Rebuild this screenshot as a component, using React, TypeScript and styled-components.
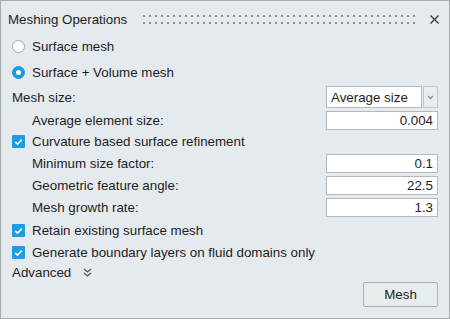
import React from "react";
import styled, { createGlobalStyle } from "styled-components";

const Global = createGlobalStyle`
  html, body { margin: 0; padding: 0; background: #e4eaee; }
  * { box-sizing: border-box; }
`;

const Panel = styled.div`
  width: 450px;
  height: 319px;
  border: 1px solid #a6abb0;
  background: #e4eaee;
  display: flex;
  flex-direction: column;
  font-family: "Liberation Sans", Arial, sans-serif;
  font-size: 13.33px;
  color: #1e1e1e;
`;

const TitleBar = styled.div`
  height: 37px;
  display: flex;
  align-items: center;
  padding: 0 9px 0 7px;
`;

const Title = styled.span`
  white-space: nowrap;
`;

const Grip = styled.svg`
  flex: 1;
  height: 9px;
  margin: 0 10px 0 16px;
`;

const CloseButton = styled.svg`
  width: 11px;
  height: 11px;
  flex: none;
`;

const Body = styled.div`
  display: flex;
  flex-direction: column;
  padding: 0 11px;
`;

const Row = styled.div<{ $h: number; $mt: number; $indent?: boolean }>`
  height: ${(p) => p.$h}px;
  margin-top: ${(p) => p.$mt}px;
  padding-left: ${(p) => (p.$indent ? 20 : 0)}px;
  display: flex;
  align-items: center;
  white-space: nowrap;
`;

const Label = styled.span`
  flex: 1;
`;

const RadioCircle = styled.span<{ $on?: boolean }>`
  width: 13px;
  height: 13px;
  border-radius: 50%;
  flex: none;
  margin-right: 7px;
  background: ${(p) => (p.$on ? "#1a9be0" : "#ffffff")};
  border: 1px solid ${(p) => (p.$on ? "#1a9be0" : "#a3a7ab")};
  display: flex;
  align-items: center;
  justify-content: center;
  &::after {
    content: "";
    display: ${(p) => (p.$on ? "block" : "none")};
    width: 5px;
    height: 5px;
    border-radius: 50%;
    background: #ffffff;
  }
`;

const CheckBox = styled.span`
  width: 13px;
  height: 13px;
  flex: none;
  margin-right: 7px;
  background: #1d9de2;
  border-radius: 1px;
  display: flex;
  align-items: center;
  justify-content: center;
`;

const Field = styled.div`
  width: 112px;
  height: 19px;
  background: #ffffff;
  border: 1px solid #b4b8bc;
  display: flex;
  align-items: center;
  justify-content: flex-end;
  padding-right: 4px;
`;

const Select = styled.div`
  width: 112px;
  height: 22px;
  display: flex;
`;

const SelectValue = styled.div`
  flex: 1;
  background: #ffffff;
  border: 1px solid #b4b8bc;
  display: flex;
  align-items: center;
  padding-left: 4px;
`;

const SelectArrow = styled.div`
  width: 15px;
  margin-left: 1px;
  border: 1px solid #c2c6ca;
  background: #e9edf0;
  display: flex;
  align-items: center;
  justify-content: center;
`;

const Expander = styled.svg`
  width: 9px;
  height: 9px;
  margin-left: 12px;
`;

const ButtonRow = styled.div`
  display: flex;
  justify-content: flex-end;
`;

const Button = styled.button`
  width: 75px;
  height: 25px;
  border: 1px solid #aab0b5;
  border-radius: 2px;
  background: #e7ecef;
  font-family: inherit;
  font-size: 13.33px;
  color: #1e1e1e;
  padding: 0;
`;

const Check = () => (
  <svg width="9" height="8" viewBox="0 0 9 8">
    <polyline points="1.3,4.2 3.5,6.2 7.8,1.6" fill="none" stroke="#fff" strokeWidth="1.6" />
  </svg>
);

export default function App() {
  return (
    <>
      <Global />
      <Panel>
        <TitleBar>
          <Title>Meshing Operations</Title>
          <Grip>
            <defs>
              <pattern id="dots" width="6" height="7" patternUnits="userSpaceOnUse">
                <rect x="0" y="0" width="2" height="2" fill="#8d9297" />
              </pattern>
            </defs>
            <rect x="0" y="0" width="100%" height="9" fill="url(#dots)" />
          </Grip>
          <CloseButton viewBox="0 0 11 11">
            <path d="M1.5 1.5 L9.5 9.5 M9.5 1.5 L1.5 9.5" stroke="#3a3a3a" strokeWidth="1.3" />
          </CloseButton>
        </TitleBar>
        <Body>
          <Row $h={17} $mt={0}>
            <RadioCircle />
            <Label>Surface mesh</Label>
          </Row>
          <Row $h={17} $mt={9}>
            <RadioCircle $on />
            <Label>Surface + Volume mesh</Label>
          </Row>
          <Row $h={22} $mt={5}>
            <Label>Mesh size:</Label>
            <Select>
              <SelectValue>Average size</SelectValue>
              <SelectArrow>
                <svg width="7" height="5" viewBox="0 0 7 5">
                  <polyline points="1,1 3.5,3.5 6,1" fill="none" stroke="#8a8e92" strokeWidth="1.3" />
                </svg>
              </SelectArrow>
            </Select>
          </Row>
          <Row $h={19} $mt={3} $indent>
            <Label>Average element size:</Label>
            <Field>0.004</Field>
          </Row>
          <Row $h={19} $mt={2}>
            <CheckBox>
              <Check />
            </CheckBox>
            <Label>Curvature based surface refinement</Label>
          </Row>
          <Row $h={19} $mt={3} $indent>
            <Label>Minimum size factor:</Label>
            <Field>0.1</Field>
          </Row>
          <Row $h={19} $mt={3} $indent>
            <Label>Geometric feature angle:</Label>
            <Field>22.5</Field>
          </Row>
          <Row $h={19} $mt={3} $indent>
            <Label>Mesh growth rate:</Label>
            <Field>1.3</Field>
          </Row>
          <Row $h={19} $mt={4}>
            <CheckBox>
              <Check />
            </CheckBox>
            <Label>Retain existing surface mesh</Label>
          </Row>
          <Row $h={19} $mt={3}>
            <CheckBox>
              <Check />
            </CheckBox>
            <Label>Generate boundary layers on fluid domains only</Label>
          </Row>
          <Row $h={19} $mt={1}>
            <span>Advanced</span>
            <Expander viewBox="0 0 9 9">
              <polyline points="1,1 4.5,4 8,1" fill="none" stroke="#555" strokeWidth="1.3" />
              <polyline points="1,5 4.5,8 8,5" fill="none" stroke="#555" strokeWidth="1.3" />
            </Expander>
          </Row>
          <ButtonRow>
            <Button>Mesh</Button>
          </ButtonRow>
        </Body>
      </Panel>
    </>
  );
}
